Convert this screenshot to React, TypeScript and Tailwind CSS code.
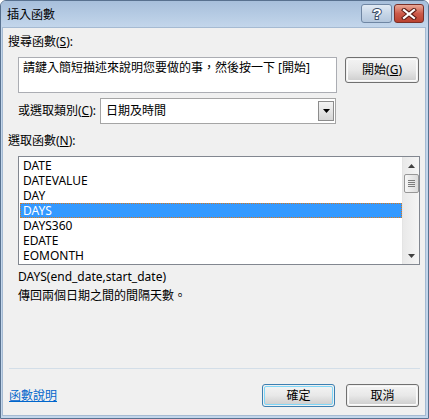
import React from "react";

const items = ["DATE", "DATEVALUE", "DAY", "DAYS", "DAYS360", "EDATE", "EOMONTH"];

function Win7Button({ label, def, w }: { label: React.ReactNode; def?: boolean; w: string }) {
  return (
    <div
      className={`${w} h-[23px] rounded-[3px] border ${def ? "border-[#3c7fb1]" : "border-[#707070]"} p-px`}
    >
      <div
        className={`w-full h-full rounded-[2px] border ${def ? "border-[#7fd6f7]" : "border-[#fbfbfb]"} bg-gradient-to-b from-[#f2f2f2] via-[#e8e8e8] to-[#d0d0d0] flex items-center justify-center text-[12px] leading-[16px] text-black`}
      >
        {label}
      </div>
    </div>
  );
}

export default function App() {
  return (
    <div
      className="w-[429px] h-[419px] bg-[#c3d6eb] border border-[#58718f] rounded-t-[6px] flex flex-col overflow-hidden text-black"
      style={{ fontFamily: '"Noto Sans", "Noto Sans CJK TC", sans-serif' }}
    >
      {/* title bar */}
      <div className="h-[26px] flex bg-gradient-to-b from-[#a7bfdb] to-[#c3d6eb] shrink-0">
        <div className="pl-[6px] pt-[6px] text-[12px] leading-[16px] text-black">插入函數</div>
        <div className="ml-auto mr-[4px] mt-[3px] flex gap-[2px]">
          <div className="w-[31px] h-[19px] rounded-[3px] border border-[#6f86a3] bg-gradient-to-b from-[#e1eaf4] via-[#c7d6e7] to-[#b3c6dc] flex items-center justify-center">
            <svg width="14" height="15" viewBox="0 0 14 15">
              <text
                x="7"
                y="13"
                textAnchor="middle"
                fontSize="15"
                fontWeight="bold"
                fontFamily="Liberation Sans, sans-serif"
                fill="#ffffff"
                stroke="#3d4f68"
                strokeWidth="2"
                paintOrder="stroke"
              >
                ?
              </text>
            </svg>
          </div>
          <div className="w-[30px] h-[19px] rounded-[3px] border border-[#7a2f27] bg-gradient-to-b from-[#e9a998] via-[#cc5a4a] to-[#b9412f] flex items-center justify-center">
            <svg width="16" height="12" viewBox="0 0 16 12">
              <path d="M3 2 L13 10 M13 2 L3 10" stroke="#5a1c14" strokeWidth="4.2" strokeLinecap="square" />
              <path d="M3 2 L13 10 M13 2 L3 10" stroke="#ffffff" strokeWidth="2.2" strokeLinecap="square" />
            </svg>
          </div>
        </div>
      </div>

      {/* client area */}
      <div className="flex-1 ml-px mr-[2px] mb-[2px] border border-[#a5bad2] bg-[#f0f0f0] flex flex-col pl-[5px] pr-[5px] pt-[6px] pb-[8px] text-[12px] leading-[16px]">
        <div>
          搜尋函數(<span className="underline">S</span>):
        </div>

        <div className="mt-[7px] flex items-start pl-[10px]">
          <div className="w-[319px] h-[36px] bg-white border border-[#abadb3] pl-[4px] pt-[2px]">
            請鍵入簡短描述來說明您要做的事，然後按一下 [開始]
          </div>
          <div className="ml-[8px] w-[74px] h-[26px] rounded-[3px] border border-[#707070] p-px">
            <div className="w-full h-full rounded-[2px] border border-[#fbfbfb] bg-gradient-to-b from-[#f2f2f2] via-[#e8e8e8] to-[#d0d0d0] flex items-center justify-center">
              開始(<span className="underline">G</span>)
            </div>
          </div>
        </div>

        <div className="mt-[5px] flex items-center pl-[10px]">
          <div className="w-[82px]">
            或選取類別(<span className="underline">C</span>):
          </div>
          <div className="w-[236px] h-[26px] bg-white border border-[#a5a5a5] flex items-center pl-[5px]">
            <span>日期及時間</span>
            <div className="ml-auto mr-px w-[16px] h-[20px] border border-[#8c8c8c] bg-gradient-to-b from-[#f4f4f4] to-[#d6d6d6] flex items-center justify-center">
              <svg width="7" height="4" viewBox="0 0 7 4">
                <path d="M0 0 H7 L3.5 4 Z" fill="#000" />
              </svg>
            </div>
          </div>
        </div>

        <div className="mt-[9px]">
          選取函數(<span className="underline">N</span>):
        </div>

        <div className="mt-[7px] ml-[10px] h-[109px] bg-white border border-[#828790] flex">
          <div className="flex-1 pt-px pl-px">
            {items.map((it) =>
              it === "DAYS" ? (
                <div
                  key={it}
                  className="h-[15px] leading-[13px] bg-[#3399ff] text-white border border-dotted border-[#d8781c] pl-[2px]"
                >
                  {it}
                </div>
              ) : (
                <div key={it} className="h-[15px] leading-[15px] pl-[3px]">
                  {it}
                </div>
              )
            )}
          </div>
          <div className="w-[17px] bg-gradient-to-r from-[#e9e9e9] to-[#f5f5f5] border-l border-[#e4e4e4] flex flex-col items-center">
            <div className="h-[17px] flex items-center justify-center">
              <svg width="7" height="4" viewBox="0 0 7 4">
                <path d="M0 4 H7 L3.5 0 Z" fill="#404040" />
              </svg>
            </div>
            <div className="w-[15px] h-[19px] rounded-[2px] border border-[#979797] bg-gradient-to-r from-[#f6f6f6] to-[#dcdcdc] flex flex-col items-center justify-center gap-px">
              <div className="w-[7px] h-px bg-[#7c7c7c]" />
              <div className="w-[7px] h-px bg-[#7c7c7c]" />
              <div className="w-[7px] h-px bg-[#7c7c7c]" />
              <div className="w-[7px] h-px bg-[#7c7c7c]" />
            </div>
            <div className="flex-1" />
            <div className="h-[17px] flex items-center justify-center">
              <svg width="7" height="4" viewBox="0 0 7 4">
                <path d="M0 0 H7 L3.5 4 Z" fill="#404040" />
              </svg>
            </div>
          </div>
        </div>

        <div className="mt-[4px] ml-[10px]">DAYS(end_date,start_date)</div>
        <div className="mt-[3px] ml-[10px]">傳回兩個日期之間的間隔天數。</div>

        <div className="flex-1" />

        <div className="ml-px h-px bg-[#d3dee8]" />

        <div className="mt-[15px] flex items-center">
          <span className="ml-px text-[#0066cc] underline">函數說明</span>
          <div className="ml-auto mr-px flex gap-[11px]">
            <Win7Button label="確定" def w="w-[73px]" />
            <Win7Button label="取消" w="w-[73px]" />
          </div>
        </div>
      </div>
    </div>
  );
}
